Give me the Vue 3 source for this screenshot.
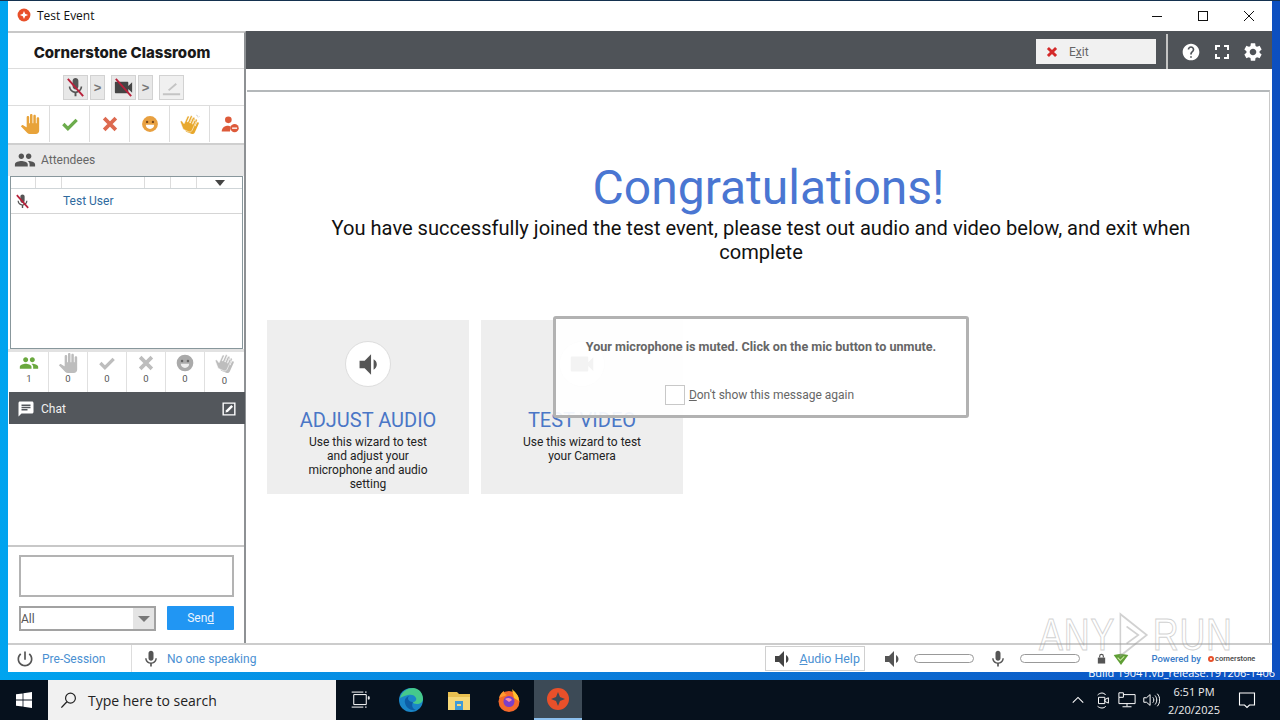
<template>
  <div class="screen">
    <div class="desktop">
      <div class="window">
        <!-- title bar -->
        <div class="titlebar">
          <div class="title-left">
            <svg class="app-logo" viewBox="0 0 24 24"><circle cx="12" cy="12" r="11" fill="#e8502a"/><path d="M12 5l2 5 5 2-5 2-2 5-2-5-5-2 5-2z" fill="#fff"/></svg>
            <span>Test Event</span>
          </div>
          <div class="win-buttons">
            <svg viewBox="0 0 46 30"><path d="M18 15.5h10" stroke="#111" fill="none"/></svg>
            <svg viewBox="0 0 46 30"><rect x="18.5" y="10.5" width="9" height="9" stroke="#111" fill="none"/></svg>
            <svg viewBox="0 0 46 30"><path d="M18 10l10 10M28 10L18 20" stroke="#111" fill="none"/></svg>
          </div>
        </div>

        <div class="body">
          <!-- left column -->
          <aside class="sidebar">
            <div class="brand">Cornerstone Classroom</div>

            <div class="media-row">
              <button class="mbtn"><svg viewBox="0 0 24 24"><path :d="icons.mic" fill="#555"/><path d="M4 3l16 18" stroke="#b8203a" stroke-width="2"/></svg></button>
              <button class="mbtn arrow">&gt;</button>
              <button class="mbtn cam"><svg viewBox="0 0 24 24"><path :d="icons.cam" fill="#444"/><path d="M4 3l16 18" stroke="#b8203a" stroke-width="2"/></svg></button>
              <button class="mbtn arrow">&gt;</button>
              <button class="mbtn pen"><svg viewBox="0 0 24 24"><path d="M3 19h18M9 15l8-7" stroke="#c4c4c4" stroke-width="2" fill="none"/></svg></button>
            </div>

            <div class="react-row">
              <div class="react-cell"><svg viewBox="0 0 24 24"><path :d="icons.hand" fill="#e8a33a"/></svg></div>
              <div class="react-cell"><svg viewBox="0 0 24 24"><path d="M4 12l5.500 5.500L20 7" stroke="#6cac4c" stroke-width="4" fill="none"/></svg></div>
              <div class="react-cell"><svg viewBox="0 0 24 24"><path d="M5 5l14 14M19 5L5 19" stroke="#dd6a50" stroke-width="4.400" fill="none"/></svg></div>
              <div class="react-cell"><svg viewBox="0 0 24 24"><circle cx="12" cy="12" r="9.500" fill="#e8a040"/><circle cx="8.500" cy="9.500" r="1.400" fill="#7a4a1c"/><circle cx="15.500" cy="9.500" r="1.400" fill="#7a4a1c"/><path d="M7 13h10c0 3-2 5-5 5s-5-2-5-5z" fill="#fff"/></svg></div>
              <div class="react-cell"><svg viewBox="0 0 24 24"><g fill="#e8a82c"><path :d="icons.hand" transform="rotate(24 12 12) translate(3 3) scale(.8)"/><path :d="icons.hand" transform="rotate(24 12 12) translate(-1 2) scale(.8)" stroke="#fff" stroke-width=".8"/></g><path d="M20 1l1 2M23 3l-1 1" stroke="#bbb" fill="none"/></svg></div>
              <div class="react-cell"><svg viewBox="0 0 24 24"><circle cx="10" cy="7" r="4" fill="#dd5a3a"/><path d="M2 21c0-5 4-7 8-7l3 1-1 6z" fill="#dd5a3a"/><circle cx="17.500" cy="17" r="5" fill="#dd5a3a"/><path d="M14.500 17h6" stroke="#fff" stroke-width="1.600"/></svg></div>
            </div>

            <div class="attendees-head">
              <svg viewBox="0 0 24 24"><path :d="icons.people" fill="#555"/></svg>
              <span>Attendees</span>
            </div>

            <div class="attendee-list">
              <div class="list-head">
                <span style="width: 25px"></span>
                <span style="width: 26px"></span>
                <span style="width: 83px"></span>
                <span style="width: 26px"></span>
                <span style="width: 26px"></span>
                <span class="sort"><i></i></span>
              </div>
              <div class="list-row">
                <svg viewBox="0 0 24 24"><path :d="icons.mic" fill="#555"/><path d="M4 3l16 18" stroke="#b8203a" stroke-width="2.400"/></svg>
                <span>Test User</span>
              </div>
            </div>

            <div class="count-row">
              <div class="count-cell" v-for="c in counters" :key="c.key">
                <svg viewBox="0 0 24 24" v-html="c.svg"></svg>
                <span>{{ c.value }}</span>
              </div>
            </div>

            <div class="chat-head">
              <svg viewBox="0 0 24 24"><path :d="icons.chat" fill="#fff"/></svg>
              <span>Chat</span>
              <svg class="popout" viewBox="0 0 24 24"><path d="M2 2h20v20H2z" fill="none" stroke="#fff" stroke-width="2.400"/><path d="M6 18l1-4 9-9 3 3-9 9z" fill="#fff"/></svg>
            </div>
            <div class="chat-log"></div>
            <div class="chat-form">
              <div class="chat-input"></div>
              <div class="chat-send">
                <div class="chat-select"><span>All</span><b><i></i></b></div>
                <button class="send"><span>Sen<u>d</u></span></button>
              </div>
            </div>
          </aside>

          <!-- main area -->
          <main class="main">
            <div class="topbar">
              <button class="exit">
                <svg viewBox="0 0 24 24"><path d="M5 5l14 14M19 5L5 19" stroke="#d42a2a" stroke-width="5" fill="none"/></svg>
                <span>E<u>x</u>it</span>
              </button>
              <div class="top-sep"></div>
              <svg class="top-help" viewBox="0 0 24 24"><path :d="icons.help" fill="#fff"/></svg>
              <svg class="top-full" viewBox="4 4 16 16"><path :d="icons.full" fill="#fff"/></svg>
              <svg class="top-gear" viewBox="0 0 24 24"><path :d="icons.gear" fill="#fff"/></svg>
            </div>
            <div class="panel">
              <h1>Congratulations!</h1>
              <p class="lead">You have successfully joined the test event, please test out audio and video below, and exit when complete</p>
              <div class="cards">
                <div class="card">
                  <div class="round"><svg class="round-vol" viewBox="2 3 16 18"><path :d="icons.vol" fill="#555"/></svg></div>
                  <h2>ADJUST AUDIO</h2>
                  <p>Use this wizard to test and adjust your microphone and audio setting</p>
                </div>
                <div class="card">
                  <div class="round"><svg class="round-cam" viewBox="0 0 24 24"><path :d="icons.cam" fill="#555"/></svg></div>
                  <h2>TEST VIDEO</h2>
                  <p>Use this wizard to test your Camera</p>
                </div>
              </div>
              <div class="notice">
                <div class="notice-text">Your microphone is muted. Click on the mic button to unmute.</div>
                <label class="notice-check"><i></i><span><u>D</u>on't show this message again</span></label>
              </div>
            </div>
          </main>
        </div>

        <!-- status bar -->
        <footer class="status">
          <div class="status-a">
            <svg viewBox="0 0 24 24"><path :d="icons.power" fill="#555"/></svg>
            <span>Pre-Session</span>
          </div>
          <div class="status-b">
            <svg viewBox="0 0 24 24"><path :d="icons.mic" fill="#555"/></svg>
            <span>No one speaking</span>
          </div>
          <div class="status-right">
            <button class="audio-help">
              <svg viewBox="2 3 16 18"><path :d="icons.vol" fill="#444"/></svg>
              <span><u>A</u>udio Help</span>
            </button>
            <svg class="s-vol" viewBox="2 3 16 18"><path :d="icons.vol" fill="#555"/></svg>
            <div class="level"></div>
            <svg class="s-mic" viewBox="0 0 24 24"><path :d="icons.mic" fill="#555"/></svg>
            <div class="level"></div>
            <svg class="s-lock" viewBox="0 0 24 24"><path d="M4 10h16v13H4z" fill="#555"/><path d="M8 10V7a4 4 0 0 1 8 0v3" fill="none" stroke="#555" stroke-width="2.500"/></svg>
            <svg class="s-shield" viewBox="0 0 24 24"><path d="M1 6l11-2 11 2-11 15z" fill="#5e9e34"/><path d="M7 10l4 4 6-6" stroke="#cfe8a8" stroke-width="1.600" fill="none"/></svg>
            <span class="powered">Powered by</span>
            <div class="cs-logo"><i></i><span>cornerstone</span></div>
          </div>
        </footer>
      </div>
      <div class="build">Build 19041.vb_release.191206-1406</div>
    </div>

    <!-- taskbar -->
    <div class="taskbar">
      <div class="start">
        <svg viewBox="0 0 16 16"><path d="M0 2.300l6.600-.9v6.200H0zM7.400 1.300L16 0v7.600H7.400zM0 8.400h6.600v6.200L0 13.700zM7.400 8.400H16V16l-8.600-1.300z" fill="#fff"/></svg>
      </div>
      <div class="search">
        <svg viewBox="0 0 24 24"><circle cx="14.500" cy="9" r="6.200" fill="none" stroke="#222" stroke-width="1.500"/><path d="M10 13.500L3 21" stroke="#222" stroke-width="1.700"/></svg>
        <span>Type here to search</span>
      </div>
      <div class="task-icons">
        <div class="task"><svg viewBox="0 0 24 24"><path d="M4.500 5.500h15v12h-15zM2 2.500h14M18 2.500h2M2 20.500h14M18 20.500h2M22 8h1v3h-1z" fill="none" stroke="#fff" stroke-width="1.200"/></svg></div>
        <div class="task"><svg viewBox="0 0 24 24"><circle cx="12" cy="12" r="12" fill="#1a86c8"/><path d="M1 10C3 3 9 0 14 0c6 0 10 5 10 11 0 3-3 5-6 5-3 0-4-1-4-2 2 0 4-2 3-4-1-3-5-4-8-3-4 1-6 2-8 3z" fill="#45c98c"/><path d="M14 14c-2 0-5-1-5-4 0-1 1-2 2-2-3 0-6 3-5 7 1 5 6 8 11 7-3-1-5-4-3-8z" fill="#0d5ea6"/></svg></div>
        <div class="task"><svg viewBox="0 0 24 24"><path d="M1 4h9l2 2h11v16H1z" fill="#e8c050"/><path d="M1 9h22v13H1z" fill="#f6d878"/><path d="M8 13h8v9H8z" fill="#3f9bd8"/><path d="M10 16h4v2h-4z" fill="#f6d878"/></svg></div>
        <div class="task"><svg viewBox="0 0 24 24"><circle cx="12" cy="13.500" r="10.500" fill="#f4692a"/><path d="M15 1c3 3 7 6 7 12l-5-3z" fill="#ffc02e"/><path d="M2 10c1-4 3-6 5-7 0 2 1 3 3 4z" fill="#ff9a2e"/><circle cx="12" cy="13.500" r="5.500" fill="#7a3fc8"/><path d="M8 11c3-2 6-1 7 1l-3 2z" fill="#ff8fa8"/></svg></div>
        <div class="task active"><svg viewBox="0 0 24 24"><circle cx="12" cy="12" r="11" fill="#e8502a"/><path d="M12 5l2 5 5 2-5 2-2 5-2-5-5-2 5-2z" fill="#3c4a56"/></svg></div>
      </div>
      <div class="tray">
        <svg class="t-chev" viewBox="0 0 16 16"><path d="M2 11l6-6 6 6" fill="none" stroke="#fff" stroke-width="1.200"/></svg>
        <svg class="t-ico" viewBox="0 0 20 20"><path d="M5 7h7v7H5zM12 9.500l4-2v6l-4-2zM4 4.500c3-3 7-3 9 0M4 17c3 2.500 7 2.500 9 0" fill="none" stroke="#fff" stroke-width="1.100"/></svg>
        <svg class="t-ico" viewBox="0 0 20 20"><path d="M1 2h5v5H1zM6 4h13v10H1V7M10 14v3M5 17.500h10" fill="none" stroke="#fff" stroke-width="1.100"/></svg>
        <svg class="t-ico" viewBox="0 0 20 20"><path d="M2 7.500h3L9 4v12l-4-3.500H2zM12 7c1.500 1.500 1.500 4.500 0 6M14.500 5c2.500 3 2.500 7 0 10M17 3c3.500 4 3.500 10 0 14" fill="none" stroke="#fff" stroke-width="1.100"/></svg>
        <div class="clock"><span>6:51 PM</span><span>2/20/2025</span></div>
        <svg class="t-note" viewBox="0 0 20 20"><path d="M2.500 3h15v12h-5l-2.500 2.500L7.500 15h-5z" fill="none" stroke="#fff" stroke-width="1.100"/></svg>
      </div>
    </div>

    <div class="watermark"><span>ANY</span><svg viewBox="0 0 40 50"><path d="M3 3l34 22L3 47zM11 16l15 9-15 9" fill="none" stroke="#9a9a9a" stroke-width="2"/></svg><span>RUN</span></div>
  </div>
</template>

<script setup>
const icons = {
  mic: 'M12 14c1.66 0 3-1.34 3-3V5c0-1.66-1.34-3-3-3S9 3.34 9 5v6c0 1.66 1.34 3 3 3zm5.3-3c0 3-2.54 5.1-5.3 5.1S6.7 14 6.7 11H5c0 3.41 2.72 6.23 6 6.72V21h2v-3.28c3.28-.48 6-3.3 6-6.72h-1.7z',
  cam: 'M17 10.5V7c0-.55-.45-1-1-1H4c-.55 0-1 .45-1 1v10c0 .55.45 1 1 1h12c.55 0 1-.45 1-1v-3.5l4 4v-11l-4 4z',
  vol: 'M3 9v6h4l5 5V4L7 9H3zm13.5 3c0-1.77-1.02-3.29-2.5-4.03v8.05c1.48-.73 2.5-2.25 2.5-4.02z',
  people: 'M16 11c1.66 0 2.99-1.34 2.99-3S17.66 5 16 5c-1.66 0-3 1.34-3 3s1.34 3 3 3zm-8 0c1.66 0 2.99-1.34 2.99-3S9.66 5 8 5C6.34 5 5 6.34 5 8s1.34 3 3 3zm0 2c-2.33 0-7 1.17-7 3.5V19h14v-2.5c0-2.33-4.67-3.5-7-3.5zm8 0c-.29 0-.62.02-.97.05 1.16.84 1.97 1.97 1.97 3.45V19h6v-2.5c0-2.33-4.67-3.5-7-3.5z',
  chat: 'M20 2H4c-1.1 0-1.99.9-1.99 2L2 22l4-4h14c1.1 0 2-.9 2-2V4c0-1.1-.9-2-2-2zM6 9h12v2H6V9zm8 5H6v-2h8v2zm4-6H6V6h12v2z',
  help: 'M12 2C6.48 2 2 6.48 2 12s4.48 10 10 10 10-4.48 10-10S17.52 2 12 2zm1 17h-2v-2h2v2zm2.07-7.75l-.9.92C13.45 12.9 13 13.5 13 15h-2v-.5c0-1.1.45-2.1 1.17-2.83l1.24-1.26c.37-.36.59-.86.59-1.41 0-1.1-.9-2-2-2s-2 .9-2 2H8c0-2.21 1.79-4 4-4s4 1.79 4 4c0 .88-.36 1.68-.93 2.25z',
  full: 'M7 14H5v5h5v-2H7v-3zm-2-4h2V7h3V5H5v5zm12 7h-3v2h5v-5h-2v3zM14 5v2h3v3h2V5h-5z',
  gear: 'M19.14 12.94c.04-.3.06-.61.06-.94 0-.32-.02-.64-.07-.94l2.03-1.58c.18-.14.23-.41.12-.61l-1.92-3.32c-.12-.22-.37-.29-.59-.22l-2.39.96c-.5-.38-1.03-.7-1.62-.94l-.36-2.54c-.04-.24-.24-.41-.48-.41h-3.84c-.24 0-.43.17-.47.41l-.36 2.54c-.59.24-1.13.57-1.62.94l-2.39-.96c-.22-.08-.47 0-.59.22L2.74 8.87c-.12.21-.08.47.12.61l2.03 1.58c-.05.3-.09.63-.09.94s.02.64.07.94l-2.03 1.58c-.18.14-.23.41-.12.61l1.92 3.32c.12.22.37.29.59.22l2.39-.96c.5.38 1.03.7 1.62.94l.36 2.54c.05.24.24.41.48.41h3.84c.24 0 .44-.17.47-.41l.36-2.54c.59-.24 1.13-.56 1.62-.94l2.39.96c.22.08.47 0 .59-.22l1.92-3.32c.12-.22.07-.47-.12-.61l-2.01-1.58zM12 15.6c-1.98 0-3.6-1.62-3.6-3.6s1.62-3.6 3.6-3.6 3.6 1.62 3.6 3.6-1.62 3.6-3.6 3.6z',
  hand: 'M23 5.5V20c0 2.2-1.8 4-4 4h-7.3c-1.08 0-2.1-.43-2.85-1.19L1 14.83s1.26-1.23 1.3-1.25c.22-.19.49-.29.79-.29.22 0 .42.06.6.16.04.01 4.31 2.46 4.31 2.46V4c0-.83.67-1.5 1.5-1.5S11 3.17 11 4v7h1V1.5c0-.83.67-1.5 1.5-1.5S15 .67 15 1.5V11h1V2.5c0-.83.67-1.5 1.5-1.5s1.5.67 1.5 1.5V11h1V5.5c0-.83.67-1.5 1.5-1.5s1.5.67 1.5 1.5z',
  power: 'M13 3h-2v10h2V3zm4.83 2.17l-1.42 1.42C17.99 7.86 19 9.81 19 12c0 3.87-3.13 7-7 7s-7-3.13-7-7c0-2.19 1.01-4.14 2.58-5.42L6.17 5.17C4.23 6.82 3 9.26 3 12c0 4.97 4.03 9 9 9s9-4.03 9-9c0-2.74-1.23-5.18-3.17-6.83z'
}

const counters = [
  { key: 'people', value: 1, svg: `<path d="${icons.people}" fill="#6aa83e"/>` },
  { key: 'hand', value: 0, svg: `<path d="${icons.hand}" fill="#bdbdbd"/>` },
  { key: 'yes', value: 0, svg: '<path d="M4 12l5.500 5.500L20 7" stroke="#bdbdbd" stroke-width="4" fill="none"/>' },
  { key: 'no', value: 0, svg: '<path d="M5 5l14 14M19 5L5 19" stroke="#bdbdbd" stroke-width="4.400" fill="none"/>' },
  { key: 'smile', value: 0, svg: '<circle cx="12" cy="12" r="10" fill="#aaa"/><circle cx="8.500" cy="9.500" r="1.500" fill="#666"/><circle cx="15.500" cy="9.500" r="1.500" fill="#666"/><path d="M7 13h10c0 3-2 5-5 5s-5-2-5-5z" fill="#eee"/>' },
  { key: 'clap', value: 0, svg: `<g fill="#bdbdbd"><path d="${icons.hand}" transform="rotate(24 12 12) translate(3 3) scale(.8)"/><path d="${icons.hand}" transform="rotate(24 12 12) translate(-1 2) scale(.8)" stroke="#fff" stroke-width=".8"/></g>` }
]
</script>

<style>
html, body {
  margin: 0;
  overflow: hidden;
}
</style>

<style scoped>
* {
  box-sizing: border-box;
}

.screen {
  position: relative;
  width: 1280px;
  height: 720px;
  display: flex;
  flex-direction: column;
  overflow: hidden;
  font-family: Roboto, "Liberation Sans", sans-serif;
  color: #222;
}

.desktop {
  height: 680px;
  padding: 0 8px;
  background: linear-gradient(to right, #00a4ef 0, #0a7fdc 45%, #0c4fc0 100%);
  border-top: 1px solid #14314f;
  display: flex;
  flex-direction: column;
}

.window {
  height: 671px;
  flex: none;
  background: #fff;
  display: flex;
  flex-direction: column;
}

.build {
  height: 8px;
  overflow: hidden;
  text-align: right;
  color: #fff;
  font-family: "Open Sans", sans-serif;
  font-size: 11px;
  line-height: 2px;
  white-space: nowrap;
  margin-right: -3px;
}

/* title bar */
.titlebar {
  height: 30px;
  flex: none;
  display: flex;
  align-items: center;
  justify-content: space-between;
}

.title-left {
  display: flex;
  align-items: center;
  gap: 6px;
  padding: 0 0 2px 9px;
  font-family: "Open Sans", sans-serif;
  font-size: 12px;
  color: #111;
}

.app-logo {
  width: 14px;
  height: 14px;
}

.win-buttons {
  display: flex;
}

.win-buttons svg {
  width: 46px;
  height: 30px;
}

.body {
  flex: 1;
  min-height: 0;
  display: flex;
}

/* sidebar */
.sidebar {
  width: 238px;
  flex: none;
  display: flex;
  flex-direction: column;
  border-right: 2px solid #8e9194;
  border-top: 2px solid #c8c8c8;
}

.brand {
  height: 36px;
  flex: none;
  display: flex;
  align-items: center;
  justify-content: center;
  font-family: Inter, sans-serif;
  font-weight: 800;
  font-size: 15px;
  color: #1a1a1a;
  border-bottom: 1px solid #ddd;
  padding: 3px 8px 0 0;
}

.media-row {
  height: 37px;
  flex: none;
  display: flex;
  align-items: center;
  padding-left: 55px;
  gap: 2px;
  border-bottom: 1px solid #ddd;
}

.mbtn {
  width: 25px;
  height: 25px;
  padding: 0;
  background: #e8e8e8;
  border: 1px solid #d2d2d2;
  display: flex;
  align-items: center;
  justify-content: center;
}

.mbtn svg {
  width: 23px;
  height: 23px;
}

.arrow {
  width: 15px;
  font-size: 13px;
  font-weight: 700;
  color: #777;
  font-family: "Liberation Sans", sans-serif;
  margin-right: 4px;
}

.pen {
  background: #f0f0f0;
}

.react-row {
  height: 37px;
  flex: none;
  display: flex;
  padding: 0 0 1px 2px;
}

.react-cell {
  width: 40px;
  display: flex;
  align-items: center;
  justify-content: center;
  border-right: 1px solid #ddd;
}

.react-cell:last-child {
  border-right: 0;
  width: 34px;
  padding-left: 6px;
}

.react-cell svg {
  width: 20px;
  height: 20px;
}

.attendees-head {
  height: 33px;
  flex: none;
  display: flex;
  align-items: center;
  gap: 5px;
  padding: 0 0 2px 6px;
  background: #e9e9e9;
  border-top: 2px solid #cfcfcf;
  font-size: 12px;
  color: #666;
}

.attendees-head svg {
  width: 22px;
  height: 22px;
}

.attendee-list {
  height: 173px;
  flex: none;
  margin: 0 0 0 2px;
  width: 233px;
  border: 1px solid #88979c;
}

.list-head {
  height: 12px;
  display: flex;
  border-bottom: 1px solid #cfd5d8;
}

.list-head span {
  border-right: 1px solid #dcdcdc;
}

.sort {
  flex: 1;
  border-right: 0 !important;
  display: flex;
  justify-content: center;
  align-items: center;
}

.sort i {
  border-left: 5px solid transparent;
  border-right: 5px solid transparent;
  border-top: 6px solid #444;
}

.list-row {
  height: 25px;
  display: flex;
  align-items: center;
  padding-left: 3px;
  border-bottom: 1px solid #d5d5d5;
  font-size: 12px;
  color: #2f6a9e;
}

.list-row svg {
  width: 17px;
  height: 17px;
  margin-right: 32px;
}

.count-row {
  height: 43px;
  flex: none;
  display: flex;
  padding-left: 2px;
  border-top: 3px solid #e2e2e2;
}

.count-cell {
  width: 39px;
  display: flex;
  flex-direction: column;
  align-items: center;
  padding-top: 1px;
  border-right: 1px solid #e0e0e0;
  font-size: 9.5px;
  color: #555;
}

.count-cell:last-child {
  border-right: 0;
}

.count-cell:last-child span {
  margin-top: 2px;
}

.count-cell svg {
  width: 20px;
  height: 20px;
}

.chat-head {
  height: 32px;
  flex: none;
  display: flex;
  align-items: center;
  padding: 1px 9px 0 8px;
  gap: 6px;
  margin: 0 -1px 0 1px;
  background: #53575c;
  color: #f0f0f0;
  font-size: 12px;
}

.chat-head svg {
  width: 18px;
  height: 18px;
}

.popout {
  margin-left: auto;
  width: 14px !important;
  height: 14px !important;
}

.chat-log {
  flex: 1;
  border-bottom: 2px solid #c8c8c8;
}

.chat-form {
  height: 96px;
  flex: none;
  padding: 8px 10px 0 11px;
  display: flex;
  flex-direction: column;
  gap: 9px;
}

.chat-input {
  width: 215px;
  height: 42px;
  border: 2px solid #b3b3b3;
}

.chat-send {
  display: flex;
  gap: 11px;
}

.chat-select {
  width: 138px;
  height: 25px;
  border: 2px solid #a2a2a2;
  display: flex;
  justify-content: space-between;
  align-items: center;
  font-size: 12px;
  color: #555;
}

.chat-select b {
  width: 21px;
  height: 100%;
  background: #e4e4e4;
  display: flex;
  align-items: center;
  justify-content: center;
}

.chat-select i {
  border-left: 6px solid transparent;
  border-right: 6px solid transparent;
  border-top: 6px solid #777;
}

.send {
  width: 67px;
  height: 24px;
  background: #2196f3;
  color: #eaf4ff;
  border: 0;
  border-radius: 1px;
  font-family: inherit;
  font-size: 12px;
  padding: 0;
}

/* main */
.main {
  flex: 1;
  min-width: 0;
  display: flex;
  flex-direction: column;
}

.topbar {
  height: 38px;
  flex: none;
  background: #4f5358;
  display: flex;
  align-items: center;
  justify-content: flex-end;
  padding: 3px 8px 0 0;
}

.exit {
  width: 120px;
  height: 25px;
  background: #f1f1f1;
  border: 0;
  display: flex;
  align-items: center;
  gap: 10px;
  padding: 0 0 0 9px;
  font-family: inherit;
  font-size: 12px;
  color: #666;
  margin-right: 10px;
}

.exit svg {
  width: 14px;
  height: 14px;
}

.top-sep {
  width: 2px;
  height: 35px;
  background: #c4c4c4;
  margin-right: 13px;
}

.top-help {
  width: 20px;
  height: 20px;
  margin-right: 13px;
}

.top-full {
  width: 16px;
  height: 16px;
  margin-right: 12px;
}

.top-gear {
  width: 22px;
  height: 22px;
}

.panel {
  position: relative;
  flex: 1;
  min-height: 0;
  margin: 21px 2px 0 1px;
  border-top: 2px solid #b4b8ba;
  border-right: 1px solid #c8c8c8;
  padding: 0 18px 0 20px;
}

h1 {
  margin: 67px 0 0;
  font-size: 48px;
  line-height: 58px;
  font-weight: 400;
  color: #4a76d2;
  text-align: center;
  padding-left: 19px;
}

.lead {
  margin: -1px 0 0 54px;
  width: 880px;
  font-size: 20.1px;
  line-height: 24px;
  color: #111;
  text-align: center;
}

.cards {
  display: flex;
  gap: 12px;
  margin-top: 56px;
}

.card {
  width: 202px;
  height: 174px;
  background: #eee;
  padding: 21px 16px 0;
  display: flex;
  flex-direction: column;
  align-items: center;
  text-align: center;
}

.round {
  width: 46px;
  height: 46px;
  flex: none;
  border-radius: 50%;
  background: #fff;
  border: 1px solid #ddd;
  display: flex;
  align-items: center;
  justify-content: center;
}

.round-vol {
  width: 21px;
  height: 23px;
}

.round-cam {
  width: 30px;
  height: 30px;
}

.card h2 {
  margin: 21px 0 3px;
  font-size: 20px;
  line-height: 24px;
  font-weight: 400;
  color: #4a76c6;
}

.card p {
  margin: 0;
  font-size: 12px;
  line-height: 14px;
  color: #222;
  width: 140px;
}

.notice {
  position: absolute;
  left: 306px;
  top: 224px;
  width: 416px;
  height: 102px;
  border: 3px solid #b2b2b2;
  border-radius: 3px;
  background: rgba(255, 255, 255, 0.93);
  display: flex;
  flex-direction: column;
  align-items: center;
}

.notice-text {
  margin-top: 20px;
  font-size: 12.6px;
  font-weight: 700;
  color: #666;
  white-space: nowrap;
}

.notice-check {
  margin-top: 31px;
  display: flex;
  align-items: center;
  gap: 4px;
  font-size: 12px;
  color: #666;
  padding-right: 3px;
}

.notice-check i {
  width: 20px;
  height: 20px;
  border: 1px solid #c8c8c8;
  background: #fff;
}

/* status bar */
.status {
  height: 29px;
  flex: none;
  display: flex;
  align-items: center;
  border-top: 2px solid #ccc;
  font-size: 12px;
  color: #4a90d2;
}

.status svg {
  width: 20px;
  height: 20px;
}

.status-a {
  width: 124px;
  height: 100%;
  display: flex;
  align-items: center;
  gap: 7px;
  padding-left: 7px;
  border-right: 1px solid #ddd;
}

.status-b {
  display: flex;
  align-items: center;
  gap: 6px;
  padding-left: 9px;
}

.status-right {
  margin-left: auto;
  display: flex;
  align-items: center;
  padding-right: 17px;
}

.audio-help {
  width: 100px;
  height: 25px;
  display: flex;
  align-items: center;
  gap: 9px;
  padding: 0 0 0 8px;
  background: #fff;
  border: 1px solid #d0d0d0;
  font-family: inherit;
  font-size: 12.4px;
  color: #4a90d2;
  margin-right: 19px;
}

.status .audio-help svg {
  width: 16px;
  height: 18px;
}

.status .s-vol {
  width: 16px;
  height: 18px;
  margin-right: 14px;
}

.level {
  width: 60px;
  height: 9px;
  border: 1px solid #999;
  border-radius: 5px;
}

.status .s-mic {
  width: 20px;
  height: 20px;
  margin: 0 12px 0 14px;
}

.status .s-lock {
  width: 11px;
  height: 11px;
  margin: 0 6px 0 16px;
}

.status .s-shield {
  width: 16px;
  height: 16px;
  margin-right: 22px;
}

.powered {
  font-size: 9.5px;
  font-weight: 500;
  color: #3a7cc8;
  margin-right: 7px;
}

.cs-logo {
  width: 47px;
  display: flex;
  align-items: center;
  gap: 1px;
  font-size: 7.5px;
  font-weight: 500;
  color: #444;
  white-space: nowrap;
}

.cs-logo i {
  width: 6px;
  height: 6px;
  flex: none;
  border-radius: 50%;
  border: 2px solid #e8502a;
}

/* taskbar */
.taskbar {
  height: 40px;
  flex: none;
  background: #06111d;
  display: flex;
  align-items: stretch;
  color: #fff;
  font-family: "Open Sans", sans-serif;
}

.start {
  width: 48px;
  display: flex;
  align-items: center;
  justify-content: center;
}

.start svg {
  width: 16px;
  height: 16px;
}

.search {
  width: 288px;
  background: #f1f1f1;
  display: flex;
  align-items: center;
  gap: 10px;
  padding-left: 11px;
  color: #222;
  font-size: 14px;
}

.search svg {
  width: 19px;
  height: 19px;
}

.task-icons {
  display: flex;
}

.task {
  width: 48px;
  display: flex;
  align-items: center;
  justify-content: center;
}

.task svg {
  width: 24px;
  height: 24px;
}

.task:first-child svg {
  width: 20px;
  height: 20px;
}

.task:nth-child(2) {
  margin-left: 3px;
}

.task:nth-child(4) {
  margin-left: 2px;
}

.active {
  margin-left: 1px;
  background: #3c4a56;
  border-bottom: 2px solid #8cc0ee;
}

.tray {
  margin-left: auto;
  display: flex;
  align-items: center;
  padding-right: 23px;
}

.t-chev {
  width: 14px;
  height: 14px;
  margin-right: 3px;
}

.t-ico {
  width: 18px;
  height: 18px;
  margin-left: 6px;
}

.clock {
  display: flex;
  flex-direction: column;
  align-items: center;
  width: 70px;
  margin-left: -1px;
  padding-top: 2px;
  font-size: 11px;
  line-height: 18px;
  color: #eee;
}

.t-note {
  width: 20px;
  height: 20px;
  margin-left: 8px;
}

.watermark {
  position: absolute;
  left: 1039px;
  top: 610px;
  display: flex;
  align-items: center;
  gap: 4px;
  font-family: "Liberation Sans", sans-serif;
  font-size: 44px;
  letter-spacing: 1px;
  color: transparent;
  -webkit-text-stroke: 1px #9a9a9a;
  opacity: 0.45;
  pointer-events: none;
  transform: scale(0.815, 1);
  transform-origin: left top;
}

.watermark svg {
  width: 38px;
  height: 50px;
}
</style>
